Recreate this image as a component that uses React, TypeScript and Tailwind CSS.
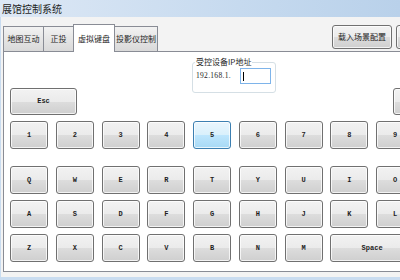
import React from "react";

const cjk = { fontFamily: '"Noto Sans CJK SC", "Noto Sans", sans-serif' };
const mono = { fontFamily: '"Liberation Mono", "DejaVu Sans Mono", monospace' };

const btnBase =
  "flex shrink-0 items-center justify-center rounded-[3px] border text-[#1e1e1e] shadow-[inset_0_0_0_1px_rgba(255,255,255,0.75)]";
const btnGray =
  "border-[#707070] bg-[linear-gradient(to_bottom,#f2f2f2_0%,#ebebeb_50%,#dddddd_50%,#cfcfcf_100%)]";
const btnHover =
  "border-[#3c7fb1] bg-[linear-gradient(to_bottom,#eaf6fd_0%,#d9f0fc_50%,#bee6fd_50%,#a7d9f5_100%)]";

type KeyProps = { label: string; hot?: boolean; wide?: boolean };

function Key({ label, hot, wide }: KeyProps) {
  return (
    <div
      className={`${btnBase} ${hot ? btnHover : btnGray} h-[28px] text-[7px] leading-[8px] font-bold ${
        wide ? "col-span-2" : ""
      }`}
      style={mono}
    >
      {label}
    </div>
  );
}

function KeyRow({ keys, className = "" }: { keys: KeyProps[]; className?: string }) {
  return (
    <div className={`grid shrink-0 grid-cols-[repeat(9,38px)] gap-x-[7.75px] ${className}`}>
      {keys.map((k) => (
        <Key key={k.label} {...k} />
      ))}
    </div>
  );
}

const nums: KeyProps[] = ["1", "2", "3", "4", "5", "6", "7", "8", "9"].map((l) => ({
  label: l,
  hot: l === "5",
}));
const qRow: KeyProps[] = ["Q", "W", "E", "R", "T", "Y", "U", "I", "O"].map((l) => ({ label: l }));
const aRow: KeyProps[] = ["A", "S", "D", "F", "G", "H", "J", "K", "L"].map((l) => ({ label: l }));
const zRow: KeyProps[] = [
  ...["Z", "X", "C", "V", "B", "N", "M"].map((l) => ({ label: l })),
  { label: "Space", wide: true },
];

const tabs = [
  { label: "地图互动", w: "w-[41px]" },
  { label: "正投", w: "w-[31px]" },
  { label: "虚拟键盘", w: "w-[42px]", active: true },
  { label: "投影仪控制", w: "w-[44px]" },
];

export default function App() {
  return (
    <div className="w-[400px] h-[280px] overflow-hidden bg-[#c9dcf0]">
      {/* title bar */}
      <div
        className="h-[17px] bg-[linear-gradient(to_right,#dde8f5,#c6daef_60%,#b9d1ea)] pl-[2px] pt-[3px] text-[10px] leading-[11px] text-[#1e1e1e]"
        style={cjk}
      >
        展馆控制系统
      </div>

      <div className="h-[260px] ml-[1px] bg-[#f3f3f3] pl-[2px] flex flex-col">
        {/* tab strip */}
        <div className="h-[34px] shrink-0 flex items-end pt-[6px]">
          {tabs.map((t) =>
            t.active ? (
              <div
                key={t.label}
                className={`${t.w} h-[28px] -mb-[1px] -ml-[1px] relative z-10 border border-b-0 border-[#898c95] bg-white flex items-center justify-center text-[8px] leading-[10px] text-[#1e1e1e]`}
                style={cjk}
              >
                {t.label}
              </div>
            ) : (
              <div
                key={t.label}
                className={`${t.w} h-[25px] border border-b-0 border-[#898c95] -ml-[1px] first:ml-0 bg-[linear-gradient(to_bottom,#f2f2f2,#e5e5e5_50%,#d9d9d9)] flex items-center justify-center text-[8px] leading-[10px] text-[#1e1e1e]`}
                style={cjk}
              >
                {t.label}
              </div>
            )
          )}
          <div className="flex-1 self-stretch flex items-start justify-end gap-[4px] pt-[2px] -mr-[20px]">
            <div className={`${btnBase} ${btnGray} w-[60px] h-[24px] text-[8px]`} style={cjk}>
              载入场景配置
            </div>
            <div className={`${btnBase} ${btnGray} w-[24px] h-[24px]`} />
          </div>
        </div>

        {/* panel */}
        <div className="h-[221px] shrink-0 border border-[#898c95] border-r-0 bg-white pl-[6px] flex flex-col">
          <div className="h-[36px] shrink-0 relative">
            <div className="absolute left-[182px] top-[10px] w-[84px] h-[31px] rounded-[3px] border border-[#d5dfe5]">
              <span
                className="absolute -top-[6px] left-[2px] bg-white px-[1px] text-[8px] leading-[10px] text-[#1e1e1e]"
                style={cjk}
              >
                受控设备IP地址
              </span>
              <div className="flex items-center pl-[3px] pt-[5px] gap-[9px]">
                <span
                  className="text-[7.5px] leading-[10px] text-[#1e1e1e] tracking-[0.3px]"
                  style={{ fontFamily: '"Liberation Serif", serif' }}
                >
                  192.168.1.
                </span>
                <div className="w-[31px] h-[16px] border border-[#7eb4ea] bg-white flex items-center pl-[2px]">
                  <div className="w-px h-[9px] bg-black" />
                </div>
              </div>
            </div>
          </div>

          <div className="flex shrink-0 items-start">
            <div className={`${btnBase} ${btnGray} w-[67px] h-[27px] text-[7px] font-bold`} style={mono}>
              Esc
            </div>
            <div className={`${btnBase} ${btnGray} ml-[316px] w-[67px] h-[27px]`} />
          </div>

          <KeyRow keys={nums} className="mt-[6px]" />
          <KeyRow keys={qRow} className="mt-[17px]" />
          <KeyRow keys={aRow} className="mt-[6px]" />
          <KeyRow keys={zRow} className="mt-[6px]" />
        </div>
      </div>
    </div>
  );
}
